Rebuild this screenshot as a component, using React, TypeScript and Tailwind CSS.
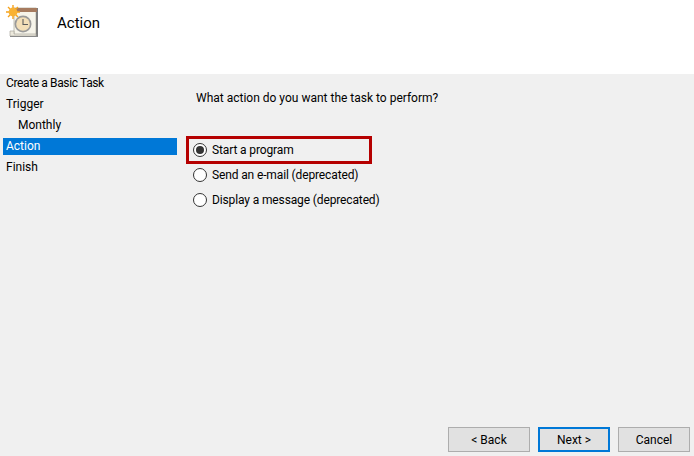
const FONT = "font-['Roboto','Noto_Sans',sans-serif]";

const steps = [
  { label: 'Create a Basic Task', tight: true },
  { label: 'Trigger' },
  { label: 'Monthly', indent: true },
  { label: 'Action', active: true },
  { label: 'Finish' },
];

const options = [
  { label: 'Start a program', checked: true },
  { label: 'Send an e-mail (deprecated)' },
  { label: 'Display a message (deprecated)' },
];

const TaskIcon = () => (
  <svg width="34" height="34" viewBox="0 0 34 34" className="shrink-0">
    {/* calendar body */}
    <rect x="9" y="4" width="22" height="28" fill="#f6f4ea" stroke="#b5b2a4" strokeWidth="0.8" />
    <rect x="31" y="4" width="2" height="29" fill="#7d7d7d" />
    <rect x="10" y="4" width="22" height="4" fill="#a67b5f" />
    <path d="M5 27 L9 27 L9 30 L31 30 L31 32 L5 32 Z" fill="#ece9dc" stroke="#a9a89e" strokeWidth="0.7" />
    <path d="M5 32 H33 V33 H5 Z" fill="#8a8a8a" />
    {/* clock */}
    <circle cx="18" cy="20" r="8.5" fill="#9a9a9a" />
    <circle cx="18" cy="20" r="6.8" fill="#f3dfb8" />
    <path d="M18 15 V20.5 H23" stroke="#5c5c5c" strokeWidth="1.1" fill="none" />
    {/* sun */}
    <g stroke="#f5a21e" strokeWidth="1.4">
      <path d="M8 1 V15 M1 8 H15 M3 3 L13 13 M13 3 L3 13" />
    </g>
    <circle cx="8" cy="8" r="4.4" fill="#f9b233" />
  </svg>
);

const Radio = ({ checked }: { checked?: boolean }) => (
  <span className="-mt-px flex h-[14px] w-[14px] shrink-0 items-center justify-center rounded-full border border-[#333333] bg-white">
    {checked && <span className="h-[8px] w-[8px] rounded-full bg-[#333333]" />}
  </span>
);

const WizardButton = ({ children, primary }: { children: string; primary?: boolean }) => (
  <button
    className={
      primary
        ? 'h-[25px] w-[72px] border-2 border-[#0078d7] bg-[#e1e1e1] text-xs text-black'
        : 'h-[25px] w-[72px] border border-[#adadad] bg-[#e1e1e1] text-xs text-black'
    }
  >
    {children}
  </button>
);

export default function App() {
  return (
    <div className={`flex h-[456px] w-[694px] flex-col overflow-hidden bg-[#f0f0f0] text-xs text-black ${FONT}`}>
      {/* Header */}
      <div className="flex h-[74px] shrink-0 items-start gap-[18px] bg-white pl-[5px] pt-[4px]">
        <TaskIcon />
        <span className="text-[15px] leading-[38px]">Action</span>
      </div>

      <div className="flex flex-1">
        {/* Steps */}
        <div className="flex w-[177px] shrink-0 flex-col gap-1 pl-[3px] pt-[1px]">
          {steps.map((s) => (
            <div
              key={s.label}
              className={`h-[17px] leading-[16px] ${s.indent ? 'pl-[15px]' : 'pl-[3px]'} ${s.active ? 'bg-[#0078d7] text-white' : ''} ${s.tight ? 'tracking-[-0.37px]' : ''}`}
            >
              {s.label}
            </div>
          ))}
        </div>

        {/* Options */}
        <div className="flex flex-1 flex-col pl-[19px] pt-[16px]">
          <p className="leading-[17px]">What action do you want the task to perform?</p>
          <div className="mt-[35px] flex flex-col gap-[8px] tracking-[-0.13px]">
            {options.map((o) => (
              <label key={o.label} className="relative -ml-[3px] flex h-[17px] items-center gap-[5px] leading-[17px]">
                <Radio checked={o.checked} />
                <span>{o.label}</span>
                {o.checked && (
                  <span className="absolute -left-[7px] -top-[6px] h-[28px] w-[186px] border-[3px] border-[#b50000]" />
                )}
              </label>
            ))}
          </div>
        </div>
      </div>

      {/* Footer */}
      <div className="flex shrink-0 justify-end gap-2 pb-[4px] pr-[4px]">
        <button className="h-[25px] w-[82px] border border-[#adadad] bg-[#e1e1e1] text-xs text-black">&lt; Back</button>
        <WizardButton primary>Next &gt;</WizardButton>
        <WizardButton>Cancel</WizardButton>
      </div>
    </div>
  );
}
